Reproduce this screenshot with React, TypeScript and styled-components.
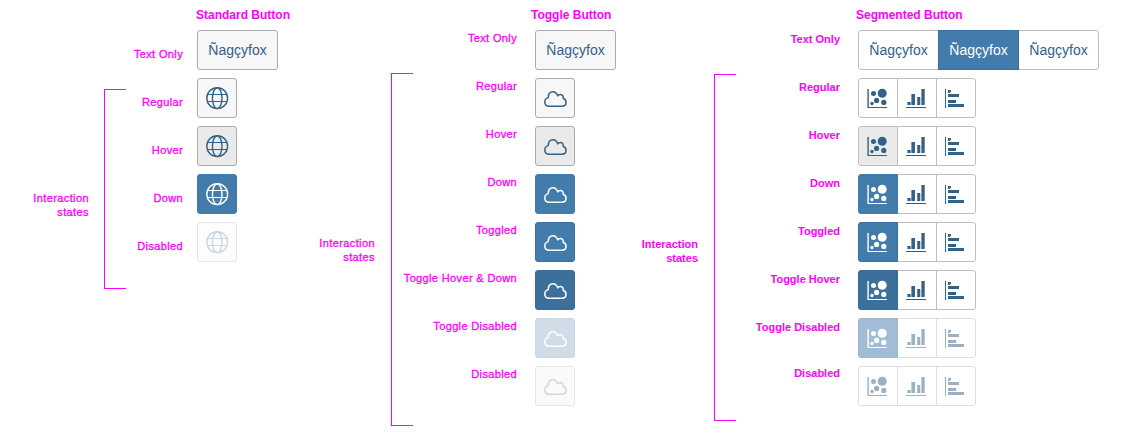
import React from 'react';
import styled, { createGlobalStyle } from 'styled-components';

const GlobalStyle = createGlobalStyle`
  body { margin: 0; background: #fff; overflow: hidden; font-family: "Liberation Sans", Arial, sans-serif; }
  * { box-sizing: border-box; }
`;

const Sheet = styled.main`
  display: flex;
  width: 1133px;
  height: 435px;
`;

const Section = styled.section<{ $width: number }>`
  display: flex;
  align-items: flex-start;
  flex: none;
  width: ${p => p.$width}px;
`;

const StatesNote = styled.div<{ $width: number; $top: number; $bold?: boolean }>`
  flex: none;
  width: ${p => p.$width}px;
  padding-top: ${p => p.$top}px;
  color: #ff00ff;
  font-size: 11px;
  line-height: 14px;
  text-align: right;
  ${p => (p.$bold ? 'font-weight: 700;' : 'letter-spacing: 0.4px; -webkit-text-stroke: 0.3px #ff00ff;')}
`;

const Bracket = styled.div<{ $top: number; $height: number; $gap: number }>`
  flex: none;
  width: 22px;
  height: ${p => p.$height}px;
  margin: ${p => p.$top}px 0 0 ${p => p.$gap}px;
  border: 1px solid #ff00ff;
  border-right: 0;
`;

const Labels = styled.div<{ $width: number; $top: number; $bold?: boolean }>`
  display: flex;
  flex-direction: column;
  flex: none;
  gap: 34px;
  width: ${p => p.$width}px;
  padding-top: ${p => p.$top}px;
  color: #ff00ff;
  font-size: 11px;
  line-height: 14px;
  ${p => (p.$bold ? 'font-weight: 700;' : 'letter-spacing: 0.36px; -webkit-text-stroke: 0.3px #ff00ff;')}
`;

const Label = styled.span<{ $raised?: boolean }>`
  display: flex;
  justify-content: flex-end;
  white-space: nowrap;
  margin-top: ${p => (p.$raised ? -2 : 0)}px;
`;

const Samples = styled.div<{ $gap: number }>`
  display: flex;
  flex-direction: column;
  align-items: flex-start;
  gap: 8px;
  margin-left: ${p => p.$gap}px;
`;

const Title = styled.h2<{ $shift: number }>`
  height: 22px;
  margin: 0 0 0 ${p => p.$shift}px;
  padding-top: 8px;
  color: #ff00ff;
  font-size: 12px;
  line-height: 14px;
  font-weight: 700;
  white-space: nowrap;
`;

type Look = { bg: string; edge: string; ink: string };

const looks: Record<string, Look> = {
  regular: { bg: '#f7f7f7', edge: '#ababab', ink: '#346187' },
  hover: { bg: '#eaeaea', edge: '#ababab', ink: '#346187' },
  down: { bg: '#427cac', edge: '#427cac', ink: '#ffffff' },
  toggled: { bg: '#427cac', edge: '#3a6f9b', ink: '#ffffff' },
  toggledHover: { bg: '#3c6f9b', edge: '#396a94', ink: '#ffffff' },
  toggledDisabled: { bg: '#d0dde9', edge: '#cbd9e5', ink: '#ffffff' },
  disabled: { bg: '#fdfdfd', edge: '#e6e6e6', ink: '#ccd7e1' },
  toggleOff: { bg: '#fafafa', edge: '#e6e6e6', ink: '#ccd7e1' },
  segment: { bg: '#ffffff', edge: '#bfbfbf', ink: '#346187' },
  segmentHover: { bg: '#eaeaea', edge: '#bfbfbf', ink: '#346187' },
  segmentToggledOff: { bg: '#a0bdd5', edge: '#9bb7ce', ink: '#ffffff' },
  segmentOff: { bg: '#ffffff', edge: '#dfdfdf', ink: '#9ab0c3' },
};

const Button = styled.button<{ $look: Look; $text?: boolean }>`
  display: flex;
  align-items: center;
  justify-content: center;
  flex: none;
  width: ${p => (p.$text ? 81 : 40)}px;
  height: 40px;
  padding: 0;
  border: 1px solid ${p => p.$look.edge};
  border-radius: 3px;
  background: ${p => p.$look.bg};
  color: ${p => p.$look.ink};
  font: 14px "Liberation Sans", Arial, sans-serif;
`;

const SegmentGroup = styled.div`
  display: flex;

  ${Button} { border-radius: 0; }
  ${Button} + ${Button} { margin-left: -1px; }
  ${Button}:first-child { border-radius: 3px 0 0 3px; }
  ${Button}:last-child { border-radius: 0 3px 3px 0; }
  ${Button}[aria-pressed='true'] { z-index: 1; }
`;

const Icon = styled.svg.attrs({ viewBox: '0 0 40 40', width: 40, height: 40 })`
  display: block;
  flex: none;
`;

const Globe = () => (
  <Icon fill="none" stroke="currentColor" strokeWidth="1.4">
    <circle cx="20.2" cy="20.2" r="10.4" />
    <ellipse cx="20.2" cy="20.2" rx="4.8" ry="10.4" />
    <path d="M10.6 16.5H29.8M10.6 23.5H29.8" strokeWidth="1.1" />
  </Icon>
);

const Cloud = () => (
  <Icon fill="none" stroke="currentColor" strokeWidth="1.5" strokeLinejoin="round">
    <path d="M14.3 28.2H26.6C29.2 28.2 31 26.7 31 24.4C31 22.4 30 20.9 28.2 20.3C28.6 18 27.2 16.6 25.3 16.6C24.2 16.6 23.3 17 22.7 17.9C21.9 15 20.2 13.7 17.9 13.7C15 13.7 13.1 16 13.3 19.6C11 20.3 9.8 21.9 9.8 23.9C9.8 26.5 11.5 28.2 14.3 28.2Z" />
  </Icon>
);

const Bubbles = () => (
  <Icon fill="currentColor">
    <path d="M9.4 11H10.8V29H29V30H9.4Z" />
    <circle cx="15.5" cy="15.5" r="2.5" />
    <circle cx="24.2" cy="15.3" r="4.5" />
    <circle cx="14" cy="25.5" r="1.7" />
    <circle cx="18.6" cy="22.4" r="2.6" />
    <circle cx="25.8" cy="24.4" r="2.6" />
  </Icon>
);

const Columns = () => (
  <Icon fill="currentColor">
    <path d="M9 29H29V30H9ZM10.4 24H13.7V27H10.4ZM14.4 16H18V27H14.4ZM20.2 19H23.3V27H20.2ZM24.4 11H27.7V27H24.4Z" />
  </Icon>
);

const Bars = () => (
  <Icon fill="currentColor">
    <path d="M9 11H10V30H9ZM12 12H15V14H14V15H12ZM12 16H23V19H12ZM12 22H20V25H12ZM12 26H28V29H12Z" />
  </Icon>
);

const sample = 'Ñagçyfox';

const segmentRows: [Look, Look][] = [
  [looks.segment, looks.segment],
  [looks.segmentHover, looks.segment],
  [looks.down, looks.segment],
  [looks.toggled, looks.segment],
  [looks.toggledHover, looks.segment],
  [looks.segmentToggledOff, looks.segmentOff],
  [looks.segmentOff, looks.segmentOff],
];

export default function App() {
  return (
    <>
      <GlobalStyle />
      <Sheet>
        <Section $width={300}>
          <StatesNote $width={89} $top={191}>Interaction<br />states</StatesNote>
          <Bracket $top={89} $height={200} $gap={15} />
          <Labels $width={57} $top={47}>
            {['Text Only', 'Regular', 'Hover', 'Down', 'Disabled'].map(t => <Label key={t}>{t}</Label>)}
          </Labels>
          <Samples $gap={14}>
            <Title $shift={-1}>Standard Button</Title>
            <Button $text $look={looks.regular}>{sample}</Button>
            {[looks.regular, looks.hover, looks.down, looks.disabled].map((look, i) => (
              <Button key={i} $look={look}><Globe /></Button>
            ))}
          </Samples>
        </Section>

        <Section $width={330}>
          <StatesNote $width={75} $top={236}>Interaction<br />states</StatesNote>
          <Bracket $top={73} $height={353} $gap={16} />
          <Labels $width={104} $top={31}>
            {['Text Only', 'Regular', 'Hover', 'Down', 'Toggled', 'Toggle Hover & Down', 'Toggle Disabled', 'Disabled'].map(t => (
              <Label key={t}>{t}</Label>
            ))}
          </Labels>
          <Samples $gap={18}>
            <Title $shift={-4}>Toggle Button</Title>
            <Button $text $look={looks.regular}>{sample}</Button>
            {[looks.regular, looks.hover, looks.down, looks.toggled, looks.toggledHover, looks.toggledDisabled, looks.toggleOff].map((look, i) => (
              <Button key={i} $look={look}><Cloud /></Button>
            ))}
          </Samples>
        </Section>

        <Section $width={503}>
          <StatesNote $width={68} $top={237} $bold>Interaction<br />states</StatesNote>
          <Bracket $top={74} $height={347} $gap={16} />
          <Labels $width={104} $top={32} $bold>
            {['Text Only', 'Regular', 'Hover', 'Down', 'Toggled', 'Toggle Hover', 'Toggle Disabled', 'Disabled'].map(t => (
              <Label key={t} $raised={t === 'Disabled'}>{t}</Label>
            ))}
          </Labels>
          <Samples $gap={18}>
            <Title $shift={-2}>Segmented Button</Title>
            <SegmentGroup>
              <Button $text $look={looks.segment}>{sample}</Button>
              <Button $text $look={looks.toggled} aria-pressed="true">{sample}</Button>
              <Button $text $look={looks.segment}>{sample}</Button>
            </SegmentGroup>
            {segmentRows.map(([first, rest], i) => (
              <SegmentGroup key={i}>
                <Button $look={first} aria-pressed={i > 1 && i < 6}><Bubbles /></Button>
                <Button $look={rest}><Columns /></Button>
                <Button $look={rest}><Bars /></Button>
              </SegmentGroup>
            ))}
          </Samples>
        </Section>
      </Sheet>
    </>
  );
}
